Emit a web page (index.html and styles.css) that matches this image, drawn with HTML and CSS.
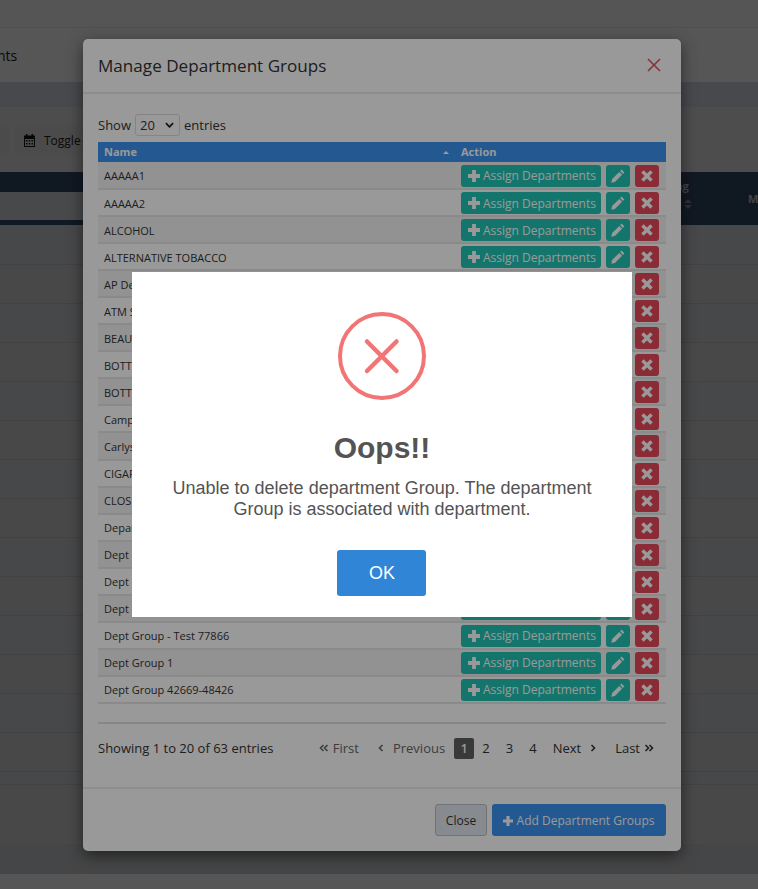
FILE: index.html
```html
<!DOCTYPE html>
<html lang="en">
<head>
<meta charset="utf-8">
<title>Manage Department Groups</title>
<link rel="stylesheet" href="styles.css">
</head>
<body>
<svg class="sprites" width="0" height="0" aria-hidden="true">
  <symbol id="i-plus" viewBox="1 1 10 10"><path d="M4.4 1h3.2v3.4H11v3.2H7.6V11H4.4V7.6H1V4.4h3.4z"/></symbol>
  <symbol id="i-pen" viewBox="0 0 14 14"><path d="M10.6.6l2.8 2.8-1.5 1.5-2.8-2.8zM8.3 2.9l2.8 2.8-7.2 7.2-3.6.8.8-3.6z"/></symbol>
  <symbol id="i-x" viewBox="1 1 10 10"><path d="M3.2 1.2L6 4l2.8-2.8 2 2L8 6l2.8 2.8-2 2L6 8l-2.8 2.8-2-2L4 6 1.2 3.2z"/></symbol>
  <symbol id="i-dl" viewBox="0 0 10 8"><path d="M4.5 1L1.5 4l3 3M8.5 1l-3 3 3 3"/></symbol>
  <symbol id="i-dr" viewBox="0 0 10 8"><path d="M1.5 1l3 3-3 3M5.5 1l3 3-3 3"/></symbol>
  <symbol id="i-l" viewBox="0 0 6 8"><path d="M4.5 1l-3 3 3 3"/></symbol>
  <symbol id="i-r" viewBox="0 0 6 8"><path d="M1.5 1l3 3-3 3"/></symbol>
</svg>

<div class="page">
  <div class="topspace"></div>
  <div class="titlebar"><span class="crumb">Departments</span></div>
  <div class="band"></div>
  <div class="toolbar">
    <span class="prevbtn"></span>
    <span class="toggle"><svg class="cal" viewBox="0 0 11 13"><path fill-rule="evenodd" d="M2 0h1.5v1.5h4V0H9v1.5h2V13H0V1.5h2zM1 5v7h9V5zM2 6h1.5v1.5H2zM4.7 6h1.6v1.5H4.7zM7.5 6H9v1.5H7.5zM2 9h1.5v1.5H2zM4.7 9h1.6v1.5H4.7zM7.5 9H9v1.5H7.5z"/></svg>Toggle Columns</span>
  </div>
  <div class="bghead">
    <div class="bgh-left"></div>
    <div class="bgh-right">
      <span class="bgh-a">Pricing<i class="bg-sort"></i></span>
      <span class="bgh-b">Margin</span>
    </div>
  </div>
  <div class="bgrows">
    <div class="bgrow first"></div><div class="bgrow"></div><div class="bgrow"></div><div class="bgrow"></div>
    <div class="bgrow"></div><div class="bgrow"></div><div class="bgrow"></div><div class="bgrow"></div>
    <div class="bgrow"></div><div class="bgrow"></div><div class="bgrow"></div><div class="bgrow"></div>
    <div class="bgrow"></div><div class="bgrow"></div>
    <div class="bgrow thin"></div>
    <div class="bgrow tall"></div>
  </div>
  <div class="bgband"></div>
</div>

<div class="backdrop"></div>

<div class="modal">
  <header class="modal-head">
    <h2>Manage Department Groups</h2>
    <svg class="close-x" viewBox="0 0 16 16"><path d="M2 2l12 12M14 2L2 14"/></svg>
  </header>
  <div class="modal-body">
    <div class="len">Show <span class="sel">20<svg viewBox="0 0 10 6"><path d="M1 1l4 4 4-4"/></svg></span> entries</div>
    <table class="grid">
      <thead>
        <tr><th class="c-name">Name<i class="sort"></i></th><th class="c-act">Action</th></tr>
      </thead>
      <tbody id="rows"></tbody>
    </table>
    <div class="foot">
      <span class="info">Showing 1 to 20 of 63 entries</span>
      <nav class="pager">
        <span class="pg off"><svg class="chev wide"><use href="#i-dl"/></svg>First</span>
        <span class="pg off gap-l prev"><svg class="chev"><use href="#i-l"/></svg>Previous</span>
        <span class="cur">1</span>
        <span class="num">2</span>
        <span class="num">3</span>
        <span class="num">4</span>
        <span class="pg next">Next<svg class="chev"><use href="#i-r"/></svg></span>
        <span class="pg gap-l">Last<svg class="chev wide"><use href="#i-dr"/></svg></span>
      </nav>
    </div>
  </div>
  <footer class="modal-foot">
    <button class="b-close">Close</button>
    <button class="b-add"><svg class="ic"><use href="#i-plus"/></svg> Add Department Groups</button>
  </footer>
</div>

<div class="swal-overlay"></div>
<div class="swal">
  <svg class="swal-icon" viewBox="0 0 88 88"><circle cx="44" cy="44" r="42"/><path d="M29 29.5l29.5 29.5M58.5 29.5L29 59"/></svg>
  <h1>Oops!!</h1>
  <p>Unable to delete department Group. The department Group is associated with department.</p>
  <button class="ok">OK</button>
</div>

<script src="app.js"></script>
</body>
</html>
```
FILE: app.js
```js
var names = ["AAAAA1","AAAAA2","ALCOHOL","ALTERNATIVE TOBACCO","AP Dept","ATM Services","BEAUTY","BOTTLED BEER","BOTTLED WINE","Campus","Carlysle","CIGARETTES","CLOSEOUT","Department","Dept Group","Dept Group 2","Dept Group 3","Dept Group - Test 77866","Dept Group 1","Dept Group 42669-48426"];
var html = "";
names.forEach(function (n) {
  html += '<tr><td class="c-name">' + n + '</td><td class="c-act"><div class="acts">' +
    '<span class="b b-teal b-assign"><svg class="ic"><use href="#i-plus"/></svg>Assign Departments</span>' +
    '<span class="b b-teal b-sq"><svg class="ic pen"><use href="#i-pen"/></svg></span>' +
    '<span class="b b-red b-sq"><svg class="ic"><use href="#i-x"/></svg></span>' +
    '</div></td></tr>';
});
document.getElementById("rows").innerHTML = html;
```
FILE: styles.css
```css
* { box-sizing: border-box; }
html, body { margin: 0; height: 100%; }
body { width: 758px; height: 889px; overflow: hidden; position: relative; font-family: "Open Sans", sans-serif; background: #fff; color: #333; }
.sprites { position: absolute; }

.page { height: 889px; background: #fff; overflow: hidden; }
.topspace { height: 28px; background: #fdfdfd; border-bottom: 1px solid #f0f0f0; }
.titlebar { height: 54px; background: #fff; display: flex; align-items: center; font-size: 14px; color: #222; }
.crumb { margin-left: -69px; }
.band { height: 25px; background: #d8dae4; }
.toolbar { height: 65px; background: #e6e6e6; padding-top: 18px; display: flex; gap: 4px; }
.prevbtn { width: 10px; height: 30px; background: #e0e0e0; border-radius: 0 4px 4px 0; }
.toggle { display: inline-flex; align-items: center; gap: 9px; height: 30px; font-size: 12px; padding: 0 10px; background: #e0e0e0; border-radius: 4px; white-space: nowrap; color: #222; }
.cal { width: 11px; height: 13px; fill: #111; }
.bghead { height: 53px; background: #324a68; display: flex; color: #c8c8c8; font-size: 11px; font-weight: 700; }
.bgh-left { width: 200px; height: 53px; background: #d6d9de; border-top: 20px solid #324a68; border-bottom: 5px solid #324a68; }
.bgh-right { flex: 1; position: relative; }
.bgh-a { position: absolute; left: 451px; top: 6px; white-space: nowrap; }
.bg-sort { position: absolute; left: 33px; top: 21px; width: 0; height: 4px; border-left: 4px solid transparent; border-right: 4px solid transparent; border-bottom: 4px solid #8a929c; }
.bg-sort::after { content: ""; position: absolute; left: -4px; top: 6px; border-left: 4px solid transparent; border-right: 4px solid transparent; border-top: 4px solid #8a929c; }
.bgh-b { position: absolute; left: 548px; top: 19px; white-space: nowrap; }
.bgrow { height: 39px; border-bottom: 1px solid #c4c4c4; }
.bgrow.first { height: 40px; }
.bgrow:nth-child(odd) { background: #d4d7dc; }
.bgrow:nth-child(even) { background: #d8d8d8; }
.bgrow.thin { height: 13px; }
.bgrow.tall { height: 59px; border-bottom: 0; }
.bgband { height: 30px; background: #cfd0d4; }

.backdrop { position: absolute; inset: 0; background: rgba(0,0,0,.44); }

.modal { position: absolute; left: 83px; top: 39px; width: 598px; height: 812px; background: #fff; border-radius: 5px; box-shadow: 0 5px 15px rgba(0,0,0,.5); display: flex; flex-direction: column; }
.modal-head { height: 55px; flex: none; display: flex; align-items: center; justify-content: space-between; padding: 0 19px 2px 15px; border-bottom: 2px solid #ececec; }
.modal-head h2 { margin: 2px 0 0; font-size: 17.1px; font-weight: 400; color: #333; line-height: 1; }
.close-x { width: 16px; height: 16px; fill: none; stroke: #e3525f; stroke-width: 1.6; }
.modal-body { flex: 1; padding: 18px 15px 0; }
.len { height: 26px; font-size: 13px; display: flex; align-items: center; gap: 4px; color: #333; margin-bottom: 4px; }
.sel { width: 45px; height: 22px; border: 1px solid #ddd; border-radius: 3px; padding-left: 4px; display: flex; align-items: center; justify-content: space-between; padding-right: 5px; background: #fff; }
.sel svg { width: 9px; height: 6px; fill: none; stroke: #222; stroke-width: 2; }
.grid { width: 568px; border-collapse: collapse; table-layout: fixed; font-size: 11px; }
.grid th { height: 20px; background: #3b93f0; color: #fff; font-size: 11px; font-weight: 700; text-align: left; padding: 0 6px 2px; position: relative; }
.grid th.c-act { padding-left: 5px; }
.grid .c-name { width: 358px; }
.sort { position: absolute; right: 7px; top: 9px; width: 0; height: 0; border: 3px solid transparent; border-top: 0; border-bottom: 3px solid #fff; }
.grid td { height: 27.05px; padding: 1px 6px 0; border-bottom: 2px solid #e6e6e6; color: #333; }
.grid td.c-act { padding: 1px 0 0 5px; }
.grid tbody tr:nth-child(odd) td { background: #f3f3f3; }
.grid tbody tr:nth-child(even) td { background: #fff; }
.acts { display: flex; gap: 5px; }
.b { display: inline-flex; align-items: center; justify-content: center; height: 22px; border-radius: 3px; color: #fff; font-size: 12px; white-space: nowrap; }
.b-teal { background: #22c4b4; }
.b-red { background: #e8485a; }
.b-assign { width: 140px; gap: 3px; justify-content: flex-start; padding-left: 7px; }
.b-sq { width: 24px; }
.ic { width: 12px; height: 12px; fill: #fff; }
.ic.pen { width: 14px; height: 14px; }
.foot { display: flex; justify-content: space-between; align-items: center; margin-top: 18px; height: 51px; border-top: 2px solid #e2e2e2; font-size: 13px; color: #333; }
.pager { display: flex; align-items: center; color: #333; margin-right: 12px; }
.pg { display: inline-flex; align-items: center; gap: 4px; white-space: nowrap; }
.off { color: #666; }
.gap-l { margin-left: 19px; }
.prev { gap: 9px; }
.chev { width: 6px; height: 8px; fill: none; stroke: currentColor; stroke-width: 1.6; }
.chev.wide { width: 10px; }
.cur { margin-left: 9px; width: 20px; height: 21px; background: #5f5f5f; color: #fff; border-radius: 2px; text-align: center; line-height: 21px; font-size: 12px; font-weight: 600; }
.num { width: 23.5px; text-align: center; }
.next { margin-left: 8px; gap: 9px; }
.modal-foot { height: 64px; flex: none; border-top: 2px solid #ececec; display: flex; justify-content: flex-end; align-items: flex-start; padding: 15px 15px 0; gap: 5px; }
.b-close { height: 32px; width: 52px; background: #e2e8ee; border: 1px solid #b8c0c8; border-radius: 3px; font: 12px "Open Sans", sans-serif; color: #333; padding: 0; }
.b-add { height: 32px; width: 174px; background: #3b93f0; border: 0; border-radius: 3px; font: 12px "Open Sans", sans-serif; color: #fff; padding: 0; white-space: nowrap; }
.b-add .ic { width: 10px; height: 10px; vertical-align: -1px; }

.swal-overlay { position: absolute; inset: 0; background: rgba(0,0,0,.4); }
.swal { position: absolute; left: 132px; top: 272px; width: 500px; height: 345px; background: #fff; text-align: center; font-family: "Liberation Sans", Arial, sans-serif; color: #545454; display: flex; flex-direction: column; align-items: center; padding-top: 40px; }
.swal-icon { width: 88px; height: 88px; fill: none; stroke: #f27474; stroke-width: 4; flex: none; }
.swal-icon path { stroke-linecap: round; stroke-width: 4.5; }
.swal h1 { margin: 30px 0 0; font-size: 30px; line-height: 36px; font-weight: 700; }
.swal p { margin: 12px 0 0; padding: 0 30px; width: 100%; font-size: 18px; line-height: 21px; }
.ok { margin-top: 30px; width: 89px; height: 46px; background: #3085d6; border: 0; border-radius: 3px; color: #fff; font: 18px "Liberation Sans", Arial, sans-serif; padding: 0 0 0 2px; position: relative; left: -1px; }
```
